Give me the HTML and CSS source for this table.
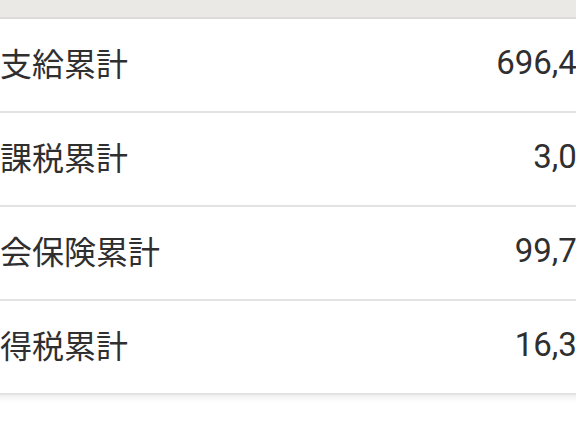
FILE: index.html
```html
<!DOCTYPE html>
<html lang="ja">
<head>
<meta charset="utf-8">
<link rel="stylesheet" href="styles.css">
</head>
<body>
<div class="topbar"></div>
<div class="list">
  <div class="row"><span class="label">総支給累計</span><span class="value">696,432</span></div>
  <div class="row"><span class="label">総課税累計</span><span class="value">3,015</span></div>
  <div class="row"><span class="label">社会保険累計</span><span class="value">99,712</span></div>
  <div class="row"><span class="label">所得税累計</span><span class="value">16,340</span></div>
</div>
</body>
</html>
```

FILE: styles.css
```css
html, body {
  margin: 0;
  padding: 0;
  overflow: hidden;
  background: #ffffff;
}
body {
  width: 576px;
  height: 430px;
  font-family: "Noto Sans CJK JP", "Roboto", sans-serif;
  color: #2f2f2f;
}
.topbar {
  height: 17px;
  background: #ebe9e5;
  border-bottom: 2px solid #dedcd8;
}
.list {
  margin: 0 -38px 0 -32px;
  background: #ffffff;
  box-shadow: 0 3px 6px rgba(0, 0, 0, 0.07);
}
.row {
  box-sizing: border-box;
  height: 94px;
  padding-bottom: 6px;
  display: flex;
  align-items: center;
  justify-content: space-between;
  border-bottom: 2px solid #e3e3e3;
}
.label {
  font-family: "Noto Sans CJK JP", sans-serif;
  font-size: 32px;
  line-height: 1;
}
.value {
  font-family: "Roboto", sans-serif;
  font-size: 33px;
  line-height: 1;
}
```
